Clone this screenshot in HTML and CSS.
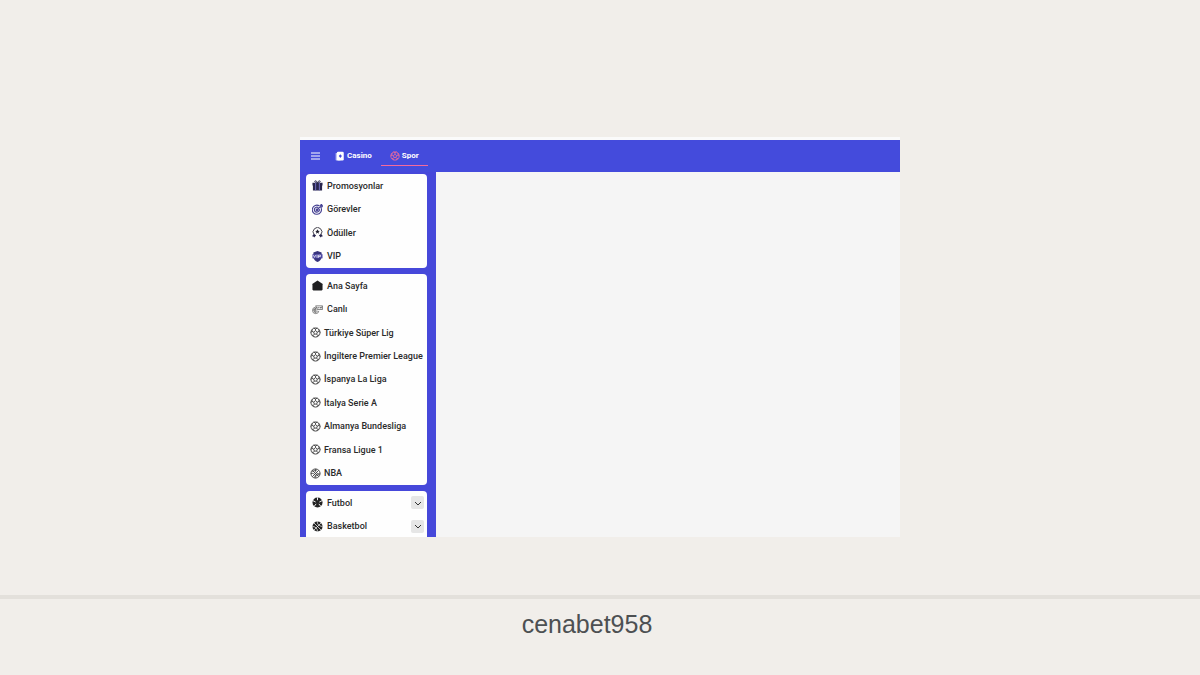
FILE: index.html
```
<!DOCTYPE html>
<html lang="tr">
<head>
    <meta charset="UTF-8">
    <meta name="viewport" content="width=device-width, initial-scale=1.0">
    <title>cenabet958</title>
    <link rel="stylesheet" href="styles.css">
</head>
<body>
    <!-- Shared icon shapes -->
    <svg class="sprite" aria-hidden="true">
        <symbol id="ball" viewBox="0 0 24 24">
            <circle cx="12" cy="12" r="10"/>
            <path d="M12 8l4 3-1.500 4.500h-5L8 11zM12 8V4.500L8 2M12 4.500L16 2M16 11l4-1.500 2 3M20 9.500L19 5M14.500 15.500l2.500 3-2 3M17 18.500l3-1M9.500 15.500l-2.500 3 2 3M7 18.500l-3-1M8 11L4 9.500l-2 3M4 9.500L5 5"/>
        </symbol>
        <symbol id="basket" viewBox="0 0 24 24">
            <circle cx="12" cy="12" r="10"/>
            <path d="M5 5l14 14M19 5L5 19M12 2c-1 4 0 7 3 9s5 2 7 1M2 12c4-1 7 0 9 3s2 5 1 7M4 7c5-1 8-1 11-3M9 21c2-5 7-7 12-6"/>
        </symbol>
    </svg>

    <main class="stage">
        <div class="screen">
            <header class="topbar">
                <button class="menu-button" aria-label="Menü">
                    <svg viewBox="0 0 9 8"><path d="M0 1h9M0 4h9M0 7h9" stroke="#fff"/></svg>
                </button>
                <nav class="tabs">
                    <a class="tab" href="#casino">
                        <svg class="tab-icon" viewBox="0 0 16 16"><rect x="1" y="3" width="8" height="12" rx="1" fill="#b9bdf5"/><rect x="3" y="1" width="11" height="14" rx="2" fill="#fff"/><path d="M8.500 5l2.500 3-2.500 3L6 8z" fill="#444bdc"/></svg>
                        Casino
                    </a>
                    <a class="tab active" href="#spor">
                        <svg class="tab-icon line-icon"><use href="#ball"/></svg>
                        Spor
                    </a>
                </nav>
            </header>

            <div class="content">
                <aside class="sidebar">
                    <nav class="card card-short">
                        <a class="item" href="#promosyonlar">
                            <svg class="icon" viewBox="0 0 24 24"><path d="M12 6C9 6 6 5 6 3s4-2 6 3c2-5 6-5 6-3s-3 3-6 3z" fill="none" stroke="#29264d" stroke-width="2"/><path d="M1 6h22v6H1zM2 12h20v11H2z" fill="#29264d"/><path d="M7 6h2v17H7zM15 6h2v17h-2z" fill="#7773c9"/></svg>
                            Promosyonlar
                        </a>
                        <a class="item" href="#gorevler">
                            <svg class="icon" viewBox="0 0 24 24" fill="none" stroke="#433f91" stroke-width="2.500"><path d="M16 4a10 10 0 1 0 4 5M14 8a5.500 5.500 0 1 0 2 3"/><circle cx="11" cy="13" r="2"/><path d="M11 13l8-8M18 6V3l3-2v3h2l-2 3h-3"/></svg>
                            Görevler
                        </a>
                        <a class="item" href="#oduller">
                            <svg class="icon" viewBox="0 0 24 24"><path d="M5 17a9.500 9.500 0 1 1 14 0" fill="none" stroke="#34333e" stroke-width="2"/><path d="M12 5l1.500 3.300 3.500.4-2.600 2.400.7 3.500-3.100-1.800-3.100 1.800.7-3.500L7 8.700l3.500-.4z" fill="#1f1e2c"/><path d="M4 15l-4 5 3 .5L5 23l4-5zM20 15l4 5-3 .5-2 2.500-4-5z" fill="#29264d"/></svg>
                            Ödüller
                        </a>
                        <a class="item" href="#vip">
                            <svg class="icon" viewBox="0 0 24 24"><path d="M12 0l9 3v9c0 6-4 10-9 12-5-2-9-6-9-12V3z" fill="#37337c"/><path d="M1 7h22v9H1z" fill="#4e49a4"/><path d="M3 9l2.500 5L8 9M11 8v7M14 15V9h4.500v3H14" fill="none" stroke="#fff" stroke-width="1.500"/></svg>
                            VIP
                        </a>
                    </nav>

                    <nav class="card card-long">
                        <a class="item" href="#anasayfa">
                            <svg class="icon" viewBox="0 0 24 24"><path d="M12 1l9 6 2 2v12l-2 2H3l-2-2V9l2-2z" fill="#1f1f21"/></svg>
                            Ana Sayfa
                        </a>
                        <a class="item" href="#canli">
                            <svg class="icon" viewBox="0 0 24 24" fill="none" stroke="#555" stroke-width="1.500"><path d="M8 4h15v8H12z"/><path d="M11 6.500v3M14 6.500v3M17 6.500l1 3 1-3M22 6.500h-1.500v3"/><path d="M8 7a7 7 0 1 0 7 8M9 10a4 4 0 1 0 3 5M2 13h10M7 8v12"/></svg>
                            Canlı
                        </a>
                        <a class="item league" href="#superlig"><svg class="icon line-icon"><use href="#ball"/></svg>Türkiye Süper Lig</a>
                        <a class="item league" href="#premier"><svg class="icon line-icon"><use href="#ball"/></svg>İngiltere Premier League</a>
                        <a class="item league" href="#laliga"><svg class="icon line-icon"><use href="#ball"/></svg>İspanya La Liga</a>
                        <a class="item league" href="#seriea"><svg class="icon line-icon"><use href="#ball"/></svg>İtalya Serie A</a>
                        <a class="item league" href="#bundesliga"><svg class="icon line-icon"><use href="#ball"/></svg>Almanya Bundesliga</a>
                        <a class="item league" href="#ligue1"><svg class="icon line-icon"><use href="#ball"/></svg>Fransa Ligue 1</a>
                        <a class="item league" href="#nba"><svg class="icon line-icon"><use href="#basket"/></svg>NBA</a>
                    </nav>

                    <div class="card card-sports">
                        <div class="item">
                            <svg class="icon" viewBox="0 0 24 24"><circle cx="12" cy="12" r="11" fill="#222"/><path d="M12 7V1M8 11L2 8M16 11l6-3M9 15l-4 5M15 15l4 5" stroke="#fff" stroke-width="2"/></svg>
                            Futbol
                            <button class="toggle" aria-label="Futbol menüsünü aç"><svg viewBox="0 0 8 8"><path d="M1 3l3 3 3-3"/></svg></button>
                        </div>
                        <div class="item">
                            <svg class="icon" viewBox="0 0 24 24"><circle cx="12" cy="12" r="11" fill="#222"/><path d="M4 4l16 16M20 4L4 20M12 1c-1 5 2 10 11 11M1 12c6 0 11 4 11 11" fill="none" stroke="#fff" stroke-width="1.500"/></svg>
                            Basketbol
                            <button class="toggle" aria-label="Basketbol menüsünü aç"><svg viewBox="0 0 8 8"><path d="M1 3l3 3 3-3"/></svg></button>
                        </div>
                    </div>
                </aside>
                <section class="page-area"></section>
            </div>
        </div>
    </main>

    <footer class="caption">cenabet958</footer>
</body>
</html>
```
FILE: styles.css
```
* {
    box-sizing: border-box;
}
body {
    margin: 0;
    min-height: 100vh;
    display: flex;
    flex-direction: column;
    background: #f1eeea;
    font-family: Roboto, "Liberation Sans", sans-serif;
}
.sprite {
    position: absolute;
    width: 0;
    height: 0;
}
button {
    padding: 0;
    border: 0;
    background: none;
    cursor: pointer;
}
a {
    color: inherit;
    text-decoration: none;
}

/* Preview */
.stage {
    flex: 1;
    display: flex;
    align-items: center;
    justify-content: center;
    padding-top: 79px;
}
.screen {
    width: 50%;
    aspect-ratio: 3 / 2;
    display: flex;
    flex-direction: column;
    overflow: hidden;
    border-top: 3px solid #fafafa;
    background: #f5f5f5;
}
.topbar {
    flex: none;
    height: 32px;
    display: flex;
    align-items: center;
    padding-left: 11px;
    background: #444bdc;
    color: #fff;
}
.menu-button {
    width: 9px;
    height: 8px;
    margin-right: 6px;
}
.menu-button svg {
    display: block;
}
.tabs {
    display: flex;
}
.tab {
    display: flex;
    align-items: center;
    gap: 2px;
    height: 20px;
    padding: 0 9px;
    border-bottom: 1px solid transparent;
    font-size: 8px;
    font-weight: 700;
}
.tab.active {
    border-bottom-color: #f56a9c;
}
.tab-icon {
    width: 10px;
    height: 10px;
}
.line-icon {
    fill: none;
    stroke: #444;
    stroke-width: 2;
}
.tab .line-icon {
    stroke: #ee6a9b;
}

/* Sidebar */
.content {
    flex: 1;
    display: flex;
    min-height: 0;
}
.sidebar {
    flex: none;
    width: 136px;
    display: flex;
    flex-direction: column;
    gap: 6px;
    padding: 2px 9px 0 6px;
    background: #4648da;
    overflow: hidden;
}
.card {
    flex: none;
    display: grid;
    grid-auto-rows: 1fr;
    border-radius: 4px;
    background: #fefefe;
}
.card-short {
    min-height: 94px;
}
.card-long {
    min-height: 211px;
}
.card-sports {
    min-height: 47px;
    border-radius: 4px 4px 0 0;
}
.item {
    display: flex;
    align-items: center;
    gap: 4px;
    padding: 0 3px 0 6px;
    color: #2a2a2a;
    font-size: 9px;
    font-weight: 500;
    white-space: nowrap;
}
.item.league {
    gap: 3px;
    padding-left: 4px;
}
.icon {
    flex: none;
    width: 11px;
    height: 11px;
}
.toggle {
    width: 13px;
    height: 13px;
    margin-left: auto;
    display: grid;
    place-items: center;
    border-radius: 2px;
    background: #e6e6e6;
}
.toggle svg {
    width: 8px;
    height: 8px;
    fill: none;
    stroke: #333;
}
.page-area {
    flex: 1;
}

/* Caption */
.caption {
    height: 80px;
    padding-right: 26px;
    border-top: 4px solid #e3e0db;
    color: #4d5052;
    font-family: "Liberation Sans", Arial, sans-serif;
    font-size: 25px;
    line-height: 50px;
    text-align: center;
}
```
